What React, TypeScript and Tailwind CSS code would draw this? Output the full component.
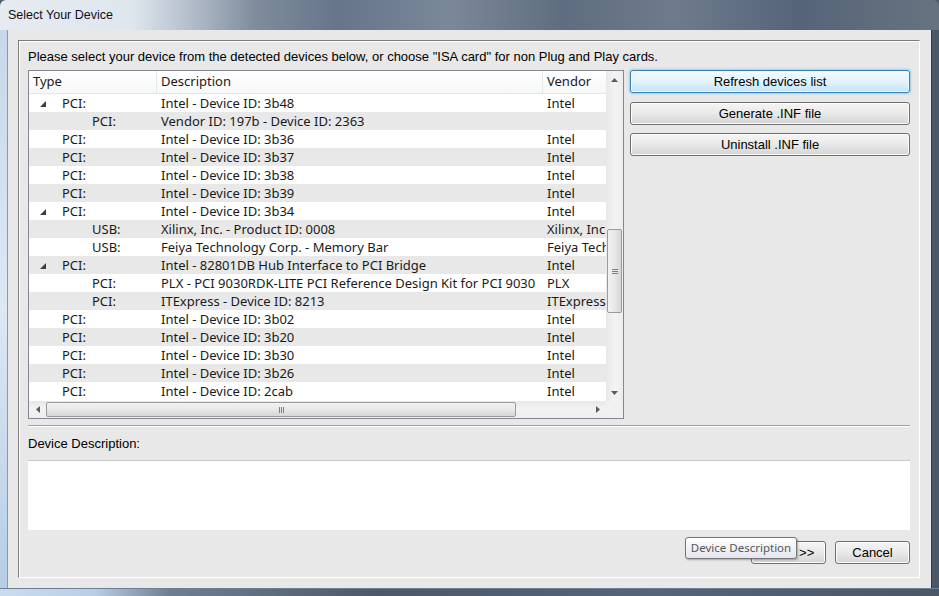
import React from 'react';

// one row of the device tree
interface DeviceRow {
  type: string;
  description: string;
  vendor: string;
  level: 0 | 1;
  expanded?: boolean;
}

const rows: DeviceRow[] = [
  { type: 'PCI:', description: 'Intel - Device ID: 3b48', vendor: 'Intel', level: 0, expanded: true },
  { type: 'PCI:', description: 'Vendor ID: 197b - Device ID: 2363', vendor: '', level: 1 },
  { type: 'PCI:', description: 'Intel - Device ID: 3b36', vendor: 'Intel', level: 0 },
  { type: 'PCI:', description: 'Intel - Device ID: 3b37', vendor: 'Intel', level: 0 },
  { type: 'PCI:', description: 'Intel - Device ID: 3b38', vendor: 'Intel', level: 0 },
  { type: 'PCI:', description: 'Intel - Device ID: 3b39', vendor: 'Intel', level: 0 },
  { type: 'PCI:', description: 'Intel - Device ID: 3b34', vendor: 'Intel', level: 0, expanded: true },
  { type: 'USB:', description: 'Xilinx, Inc. - Product ID: 0008', vendor: 'Xilinx, Inc.', level: 1 },
  { type: 'USB:', description: 'Feiya Technology Corp. - Memory Bar', vendor: 'Feiya Technology Corp.', level: 1 },
  { type: 'PCI:', description: 'Intel - 82801DB Hub Interface to PCI Bridge', vendor: 'Intel', level: 0, expanded: true },
  { type: 'PCI:', description: 'PLX - PCI 9030RDK-LITE PCI Reference Design Kit for PCI 9030', vendor: 'PLX', level: 1 },
  { type: 'PCI:', description: 'ITExpress - Device ID: 8213', vendor: 'ITExpress', level: 1 },
  { type: 'PCI:', description: 'Intel - Device ID: 3b02', vendor: 'Intel', level: 0 },
  { type: 'PCI:', description: 'Intel - Device ID: 3b20', vendor: 'Intel', level: 0 },
  { type: 'PCI:', description: 'Intel - Device ID: 3b30', vendor: 'Intel', level: 0 },
  { type: 'PCI:', description: 'Intel - Device ID: 3b26', vendor: 'Intel', level: 0 },
  { type: 'PCI:', description: 'Intel - Device ID: 2cab', vendor: 'Intel', level: 0 },
];

const ExpandedGlyph = () => (
  <svg width="6" height="6" viewBox="0 0 6 6" className="block">
    <polygon points="6,0 6,6 0,6" fill="#3c3c3c" />
  </svg>
);

const Arrow = ({ dir }: { dir: 'up' | 'down' | 'left' | 'right' }) => {
  const pts = {
    up: '0,4 3.5,0 7,4',
    down: '0,0 7,0 3.5,4',
    left: '4,0 4,7 0,3.5',
    right: '0,0 0,7 4,3.5',
  }[dir];
  const w = dir === 'up' || dir === 'down' ? 7 : 4;
  const h = dir === 'up' || dir === 'down' ? 4 : 7;
  return (
    <svg width={w} height={h} viewBox={`0 0 ${w} ${h}`} className="block">
      <polygon points={pts} fill="#5a5a5a" />
    </svg>
  );
};

const Win7Button = ({ label, focused, className = '' }: { label: string; focused?: boolean; className?: string }) => (
  <div
    className={
      'flex items-center justify-center h-[23px] rounded-[3px] border text-[13px] text-black ' +
      (focused
        ? 'border-[#3c7fb1] bg-gradient-to-b from-[#f4fbff] via-[#e3f3fd] to-[#bfe3f8] shadow-[0_0_2px_1px_#8fd2f5,inset_0_0_0_1px_#f4fbff] '
        : 'border-[#707070] bg-gradient-to-b from-[#f5f5f5] via-[#e9e9e9] to-[#d4d4d4] shadow-[inset_0_0_0_1px_#fbfbfb] ') +
      className
    }
  >
    {label}
  </div>
);

function DeviceList() {
  return (
    <div className="w-[596px] h-[349px] shrink-0 border border-[#828790] bg-white flex flex-col font-['Noto_Sans','Open_Sans',sans-serif] text-[13px] text-[#1a1a1a]">
      <div className="flex flex-1 min-h-0">
        <div className="flex-1 min-w-0 overflow-hidden">
          {/* header */}
          <div className="flex h-[23px] border-b border-[#e5e5e5] bg-gradient-to-b from-white to-[#f6f7f8] whitespace-nowrap">
            <div className="w-[128px] shrink-0 pl-[4px] flex items-center border-r border-[#e3e6ea]">Type</div>
            <div className="w-[386px] shrink-0 pl-[4px] flex items-center border-r border-[#e3e6ea]">Description</div>
            <div className="w-[80px] shrink-0 pl-[4px] flex items-center">Vendor</div>
          </div>
          {rows.map((r, i) => (
            <div
              key={i}
              className={'flex h-[18px] pt-[1px] items-center whitespace-nowrap ' + (i % 2 === 1 ? 'bg-[#e8e8e8]' : 'bg-white')}
            >
              <div className="w-[128px] shrink-0 flex items-center overflow-hidden">
                <div className={'shrink-0 flex justify-center ' + (r.level === 0 ? 'w-[33px]' : 'w-[63px]')}>
                  {r.expanded && <span className="ml-[-6px] mt-[1px]"><ExpandedGlyph /></span>}
                </div>
                <span>{r.type}</span>
              </div>
              <div className="w-[386px] shrink-0 pl-[4px] overflow-hidden">{r.description}</div>
              <div className="w-[80px] shrink-0 pl-[4px] overflow-hidden">{r.vendor}</div>
            </div>
          ))}
        </div>
        {/* vertical scrollbar */}
        <div className="w-[17px] shrink-0 flex flex-col bg-gradient-to-r from-[#e8e8e8] via-[#f3f3f3] to-[#ededed]">
          <div className="h-[17px] flex items-center justify-center"><Arrow dir="up" /></div>
          <div className="flex-1 flex flex-col pt-[141px]">
            <div className="h-[84px] mx-[1px] rounded-[2px] border border-[#9b9b9b] bg-gradient-to-r from-[#f2f2f2] via-[#e8e8e8] to-[#d6d6d6] flex items-center justify-center">
              <div className="flex flex-col gap-[1px]">
                <div className="w-[6px] h-[1px] bg-[#808080]" />
                <div className="w-[6px] h-[1px] bg-[#808080]" />
                <div className="w-[6px] h-[1px] bg-[#808080]" />
              </div>
            </div>
          </div>
          <div className="h-[17px] flex items-center justify-center"><Arrow dir="down" /></div>
        </div>
      </div>
      {/* horizontal scrollbar */}
      <div className="h-[17px] flex">
        <div className="flex-1 flex bg-gradient-to-b from-[#e8e8e8] via-[#f3f3f3] to-[#ededed]">
          <div className="w-[17px] flex items-center justify-center"><Arrow dir="left" /></div>
          <div className="w-[470px] my-[1px] rounded-[2px] border border-[#9b9b9b] bg-gradient-to-b from-[#f2f2f2] via-[#e8e8e8] to-[#d6d6d6] flex items-center justify-center">
            <div className="flex gap-[1px]">
              <div className="w-[1px] h-[6px] bg-[#808080]" />
              <div className="w-[1px] h-[6px] bg-[#808080]" />
              <div className="w-[1px] h-[6px] bg-[#808080]" />
            </div>
          </div>
          <div className="flex-1" />
          <div className="w-[17px] flex items-center justify-center"><Arrow dir="right" /></div>
        </div>
        <div className="w-[17px] bg-[#f0f0f0]" />
      </div>
    </div>
  );
}

export default function App() {
  return (
    <div className="w-[939px] h-[596px] flex flex-col overflow-hidden bg-[#4f5c6c] font-['Liberation_Sans',Arial,sans-serif] text-[12px] text-black">
      {/* title bar */}
      <div className="h-[30px] flex items-center pl-[8px] rounded-t-[6px] bg-[linear-gradient(to_right,#e6ebf1_0%,#dfe6ee_14%,#b5c0cc_20%,#7f8d9d_27%,#66758a_36%,#7a8899_48%,#5f6d80_60%,#6d7b8c_72%,#56647a_85%,#66737f_100%)]">
        <span className="text-[12.5px] text-[#111]">Select Your Device</span>
      </div>

      <div className="flex flex-1 min-h-0">
        <div className="w-[8px] bg-gradient-to-b from-[#c7d8ea] via-[#dde8f3] to-[#b6cde6] border-r border-[#8b9aab]" />

        {/* client area */}
        <div className="flex-1 bg-[#e8e8e8] pt-[10px] pl-[10px] pr-[11px] pb-[10px] relative">
          <div className="h-full border-l border-t border-[#7b7b7b] border-r border-b border-r-white border-b-white shadow-[inset_1px_1px_0_#ffffff] pl-[9px] pr-[9px] pt-[9px] flex flex-col">
            <div className="h-[14px] leading-[14px] text-[13px] whitespace-nowrap">
              Please select your device from the detected devices below, or choose "ISA card" for non Plug and Play cards.
            </div>

            <div className="flex mt-[6px]">
              <DeviceList />
              <div className="ml-[6px] flex-1 flex flex-col">
                <Win7Button label="Refresh devices list" focused />
                <Win7Button label="Generate .INF file" className="mt-[9px]" />
                <Win7Button label="Uninstall .INF file" className="mt-[8px]" />
              </div>
            </div>

            {/* etched separator */}
            <div className="mt-[6px] h-[2px] border-t border-[#a0a0a0] border-b border-b-white" />

            <div className="mt-[10px] h-[14px] leading-[14px] text-[13px]">Device Description:</div>

            <div className="mt-[9px] h-[70px] bg-white border-t border-[#c8c8c8]" />

            <div className="mt-[11px] flex justify-end gap-[9px]">
              <Win7Button label="Next >>" className="w-[75px] pl-[6px]" />
              <Win7Button label="Cancel" className="w-[75px]" />
            </div>
          </div>

          {/* tooltip over the Next button */}
          <div className="absolute left-[677px] top-[507px] w-[112px] h-[22px] flex items-center justify-center rounded-[3px] border border-[#767676] bg-gradient-to-b from-white to-[#e4e5f0] shadow-[1px_1px_2px_rgba(0,0,0,0.3)] font-['Noto_Sans','Open_Sans',sans-serif] text-[11.5px] text-[#575757] whitespace-nowrap">
            Device Description
          </div>
        </div>

        <div className="w-[8px] bg-[#4a5767] border-l border-[#2f3a47]" />
      </div>

      <div className="h-[8px] border-t border-[#6f7e90] bg-[linear-gradient(to_right,#c9dcef_0%,#b9cfe6_10%,#6f7f92_18%,#4c596a_40%,#56647a_70%,#4a5767_100%)]" />
    </div>
  );
}
